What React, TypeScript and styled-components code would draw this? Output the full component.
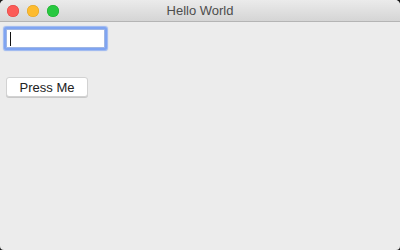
import React from "react";
import styled, { createGlobalStyle } from "styled-components";

const GlobalStyle = createGlobalStyle`
  html, body {
    margin: 0;
    padding: 0;
    width: 400px;
    height: 250px;
    overflow: hidden;
    background: #1a1a1a;
  }
`;

const Window = styled.div`
  width: 400px;
  height: 250px;
  border-radius: 5px 5px 4px 4px;
  overflow: hidden;
  background: #ececec;
  display: flex;
  flex-direction: column;
  font-family: "Liberation Sans", Arial, sans-serif;
`;

const TitleBar = styled.div`
  height: 21px;
  flex: none;
  position: relative;
  display: flex;
  align-items: center;
  justify-content: center;
  background: linear-gradient(#ebebeb, #d5d5d5);
  border-bottom: 1px solid #b4b4b4;
`;

const Lights = styled.div`
  position: absolute;
  left: 7px;
  top: 5px;
  display: flex;
  gap: 8px;
`;

const Light = styled.span<{ $color: string; $edge: string }>`
  width: 12px;
  height: 12px;
  border-radius: 50%;
  background: ${(p) => p.$color};
  box-shadow: inset 0 0 0 0.5px ${(p) => p.$edge};
`;

const Title = styled.span`
  font-size: 13px;
  color: #4d4d4d;
`;

const Content = styled.div`
  flex: 1;
  display: flex;
  flex-direction: column;
  align-items: flex-start;
  padding: 7px 0 0 6px;
`;

const Field = styled.div`
  width: 93px;
  height: 17px;
  background: #fff;
  border: 1px solid #9fb6e4;
  border-radius: 1px;
  box-shadow: 0 0 0 2px #7fa4f1, 0 0 1px 3px rgba(127, 164, 241, 0.75);
  padding: 0 2px;
  display: flex;
  align-items: center;
`;

const Caret = styled.span`
  width: 1px;
  height: 14px;
  background: #111;
  margin-left: 1px;
`;

const Button = styled.button`
  margin: 29px 0 0 0;
  width: 82px;
  height: 20px;
  background: #fff;
  border: 1px solid #d2d2d2;
  border-radius: 3px;
  box-shadow: 0 1px 0 #c8c8c8;
  font-family: "Liberation Sans", Arial, sans-serif;
  font-size: 13px;
  color: #222;
  padding: 0;
  display: flex;
  align-items: center;
  justify-content: center;
`;

export default function App() {
  return (
    <>
      <GlobalStyle />
      <Window>
        <TitleBar>
          <Lights>
            <Light $color="#fc5b57" $edge="#de4440" />
            <Light $color="#fdbb2e" $edge="#dea123" />
            <Light $color="#28c840" $edge="#1aab29" />
          </Lights>
          <Title>Hello World</Title>
        </TitleBar>
        <Content>
          <Field>
            <Caret />
          </Field>
          <Button>Press Me</Button>
        </Content>
      </Window>
    </>
  );
}
